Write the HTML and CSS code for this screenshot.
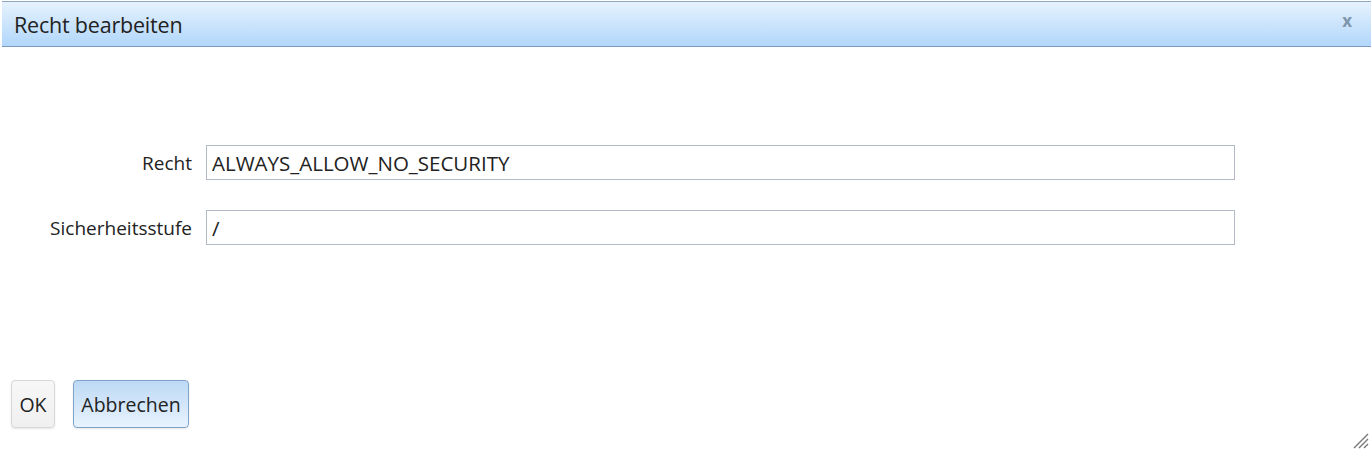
FILE: index.html
```html
<!DOCTYPE html>
<html>
<head>
    <title>Recht bearbeiten</title>
    <link rel="stylesheet" href="styles.css">
</head>
<body>

    <div class="dialog">
        <div class="titlebar">
            <span class="title">Recht bearbeiten</span>
            <span class="close">x</span>
        </div>
        <div class="content">
            <div class="row">
                <label class="label">Recht</label>
                <input class="field" type="text" value="ALWAYS_ALLOW_NO_SECURITY">
            </div>
            <div class="row">
                <label class="label">Sicherheitsstufe</label>
                <input class="field" type="text" value="/">
            </div>
        </div>
        <div class="buttons">
            <button class="btn btn-ok">OK</button>
            <button class="btn btn-primary">Abbrechen</button>
        </div>
        <div class="grip">
            <svg width="18" height="18" viewBox="0 0 18 18">
                <path d="M17 3 L3 17 M17 8 L8 17 M17 13 L13 17" stroke="#777" stroke-width="1.4" fill="none"/>
            </svg>
        </div>
    </div>

</body>
</html>
```

FILE: styles.css
```css
*
{
	margin: 0;
	padding: 0;
	box-sizing: border-box;
}
body
{
	background: #fff;
	font-family: "Open Sans", "Noto Sans", sans-serif;
	color: #222;
}
.dialog
{
	position: relative;
	margin: 1px 0 0 2px;
	height: 449px;
	background: #fff;
}
.titlebar
{
	display: flex;
	align-items: center;
	justify-content: space-between;
	height: 46px;
	padding: 0 19px 0 12px;
	background: linear-gradient(#e6f2fe, #b1d7fb);
	border-top: 1px solid #8ea8c2;
	border-bottom: 1px solid #7d9cbc;
}
.title
{
	font-size: 21.5px;
	color: #222;
	letter-spacing: -0.2px;
}
.close
{
	font-size: 17px;
	font-weight: bold;
	color: #7e97ad;
	margin-top: -7px;
}
.content
{
	padding: 98px 0 0 0;
	display: flex;
	flex-direction: column;
	gap: 30px;
}
.row
{
	display: flex;
	align-items: center;
}
.label
{
	width: 204px;
	text-align: right;
	font-size: 19px;
	padding-right: 14px;
	color: #222;
}
.field
{
	width: 1029px;
	height: 35px;
	border: 1px solid #b4b9c6;
	font: 20.5px "Open Sans", "Noto Sans", sans-serif;
	color: #222;
	padding: 0 5px;
	outline: none;
}
.buttons
{
	display: flex;
	gap: 18px;
	padding: 135px 0 0 9px;
}
.btn
{
	height: 48px;
	font: 19.5px "Open Sans", "Noto Sans", sans-serif;
	color: #222;
	border: 1px solid #d8d8d8;
	border-radius: 4px;
	background: linear-gradient(#f7f7f7, #f0f0f0);
	box-shadow: 0 1px 2px rgba(0, 0, 0, 0.1);
}
.btn-ok
{
	width: 44px;
}
.btn-primary
{
	width: 116px;
	border-color: #7fa4c8;
	background: linear-gradient(#bdd9f5, #e8f3fe);
}
.grip
{
	position: absolute;
	right: 2px;
	bottom: 1px;
	width: 18px;
	height: 18px;
}
```
